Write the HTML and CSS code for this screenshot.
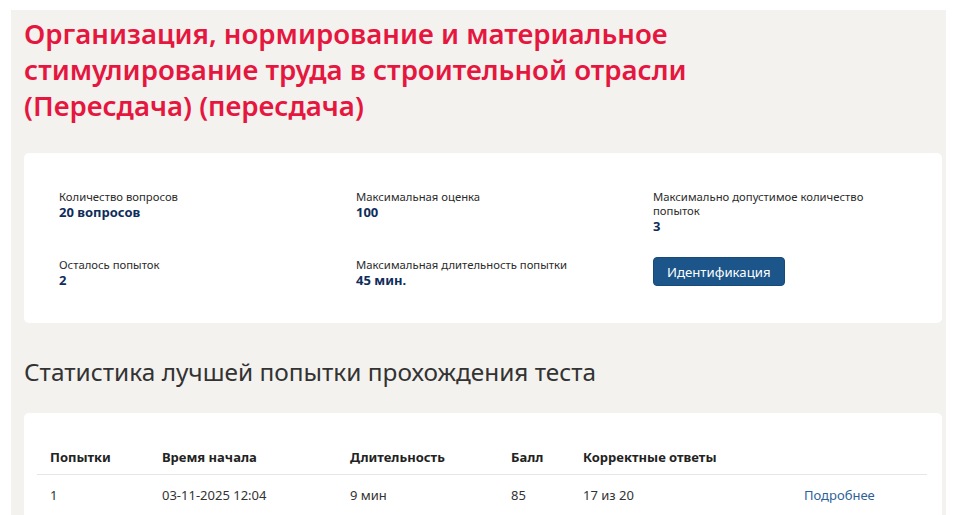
FILE: index.html
```html
<!DOCTYPE html>
<html lang="ru">
<head>
<meta charset="utf-8">
<title>Тест</title>
<link rel="stylesheet" href="styles.css">
</head>
<body>
<div class="page">
  <h1 class="title">Организация, нормирование и материальное стимулирование труда в строительной отрасли (Пересдача) (пересдача)</h1>

  <section class="card info">
    <div class="item">
      <div class="label">Количество вопросов</div>
      <div class="value">20 вопросов</div>
    </div>
    <div class="item">
      <div class="label">Максимальная оценка</div>
      <div class="value">100</div>
    </div>
    <div class="item">
      <div class="label">Максимально допустимое количество<br>попыток</div>
      <div class="value">3</div>
    </div>
    <div class="item">
      <div class="label">Осталось попыток</div>
      <div class="value">2</div>
    </div>
    <div class="item">
      <div class="label">Максимальная длительность попытки</div>
      <div class="value">45 мин.</div>
    </div>
    <div class="item">
      <button class="btn" type="button">Идентификация</button>
    </div>
  </section>

  <h2 class="subtitle">Статистика лучшей попытки прохождения теста</h2>

  <section class="card stats">
    <table class="table">
      <thead>
        <tr>
          <th class="c1">Попытки</th>
          <th class="c2">Время начала</th>
          <th class="c3">Длительность</th>
          <th class="c4">Балл</th>
          <th class="c5">Корректные ответы</th>
          <th class="c6"></th>
        </tr>
      </thead>
      <tbody>
        <tr>
          <td>1</td>
          <td>03-11-2025 12:04</td>
          <td>9 мин</td>
          <td>85</td>
          <td>17 из 20</td>
          <td><a class="link" href="#">Подробнее</a></td>
        </tr>
      </tbody>
    </table>
  </section>
</div>
</body>
</html>
```

FILE: styles.css
```css
html, body {
  margin: 0;
  padding: 0;
  background: #ffffff;
}

body {
  font-family: "Noto Sans", "Open Sans", sans-serif;
  color: #333333;
  overflow: hidden;
}

.page {
  margin: 10px 12px 0 11px;
  background: #f3f2ef;
  padding: 5px 4px 0 13px;
  min-height: 505px;
  box-sizing: border-box;
}

.title {
  margin: 0;
  font-size: 27.6px;
  line-height: 36px;
  font-weight: 600;
  color: #e5173f;
  max-width: 700px;
}

.card {
  background: #ffffff;
  border-radius: 5px;
}

.info {
  margin-top: 30px;
  display: grid;
  grid-template-columns: 297px 297px 297px;
  row-gap: 24px;
  padding: 37px 0 35px 35px;
}

.label {
  font-size: 11.3px;
  line-height: 14px;
  color: #2b2b2b;
}

.value {
  font-size: 13px;
  line-height: 16px;
  font-weight: 700;
  color: #0f2d5a;
}

.btn {
  font-family: inherit;
  font-size: 13.2px;
  color: #ffffff;
  background: #1b5589;
  border: 1px solid #174a79;
  border-radius: 4px;
  height: 29px;
  padding: 0 13px;
  margin-top: -1px;
  cursor: pointer;
}

.subtitle {
  margin: 33px 0 0 0;
  font-size: 24.4px;
  line-height: 32px;
  font-weight: 400;
  color: #333333;
}

.stats {
  margin-top: 25px;
  padding: 27px 15px 20px 13px;
}

.table {
  width: 100%;
  border-collapse: collapse;
  table-layout: fixed;
  font-size: 13px;
}

.table th {
  text-align: left;
  font-weight: 700;
  line-height: 18px;
  padding: 8px 13px;
  color: #222222;
  border-bottom: 1px solid #e6e6e6;
}

.table td {
  line-height: 18px;
  padding: 11px 13px;
  color: #333333;
}

.c1 { width: 86px; }
.c2 { width: 162px; }
.c3 { width: 135px; }
.c4 { width: 46px; }
.c5 { width: 195px; }

.link {
  color: #2e5f98;
  text-decoration: none;
}
```
